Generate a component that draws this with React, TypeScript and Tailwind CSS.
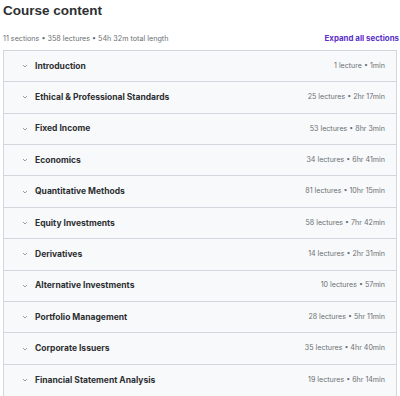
const sections = [
  { title: "Introduction", meta: "1 lecture • 1min" },
  { title: "Ethical & Professional Standards", meta: "25 lectures • 2hr 17min" },
  { title: "Fixed Income", meta: "53 lectures • 8hr 3min" },
  { title: "Economics", meta: "34 lectures • 6hr 41min" },
  { title: "Quantitative Methods", meta: "81 lectures • 10hr 15min" },
  { title: "Equity Investments", meta: "58 lectures • 7hr 42min" },
  { title: "Derivatives", meta: "14 lectures • 2hr 31min" },
  { title: "Alternative Investments", meta: "10 lectures • 57min" },
  { title: "Portfolio Management", meta: "28 lectures • 5hr 11min" },
  { title: "Corporate Issuers", meta: "35 lectures • 4hr 40min" },
  { title: "Financial Statement Analysis", meta: "19 lectures • 6hr 14min" },
];

function Chevron() {
  return (
    <svg width="8" height="8" viewBox="0 0 24 24" fill="none" stroke="#6a6f73" strokeWidth="2" strokeLinecap="round" strokeLinejoin="round">
      <path d="M7 10l5 5 5-5" />
    </svg>
  );
}

export default function App() {
  return (
    <div className="h-[396px] w-[400px] overflow-hidden bg-white pl-[3px] pr-[3px] text-[#2d2f31]" style={{ fontFamily: "Inter, 'Noto Sans', sans-serif" }}>
      <h2 className="pt-[1px] font-['Liberation_Sans',Arial,sans-serif] text-[13.5px] font-bold leading-[20px]">Course content</h2>
      <div className="mt-[12px] flex items-center justify-between">
        <span className="text-[7.2px] text-[#6a6f73]">11 sections • 358 lectures • 54h 32m total length</span>
        <button className="mr-[-2px] text-[7.9px] font-bold text-[#5b2fc9]">Expand all sections</button>
      </div>
      <div className="mt-[5px] border border-[#d1d7dc] bg-[#f7f9fa]">
        {sections.map((s) => (
          <div
            key={s.title}
            className="flex h-[31.4px] items-center border-b border-[#d1d7dc] pl-[17px] pr-[11px] last:border-b-0"
          >
            <Chevron />
            <span className="ml-[6px] flex-1 text-[8.5px] font-bold text-[#2d2f31]">{s.title}</span>
            <span className="text-[7.1px] text-[#6a6f73]">{s.meta}</span>
          </div>
        ))}
      </div>
    </div>
  );
}
